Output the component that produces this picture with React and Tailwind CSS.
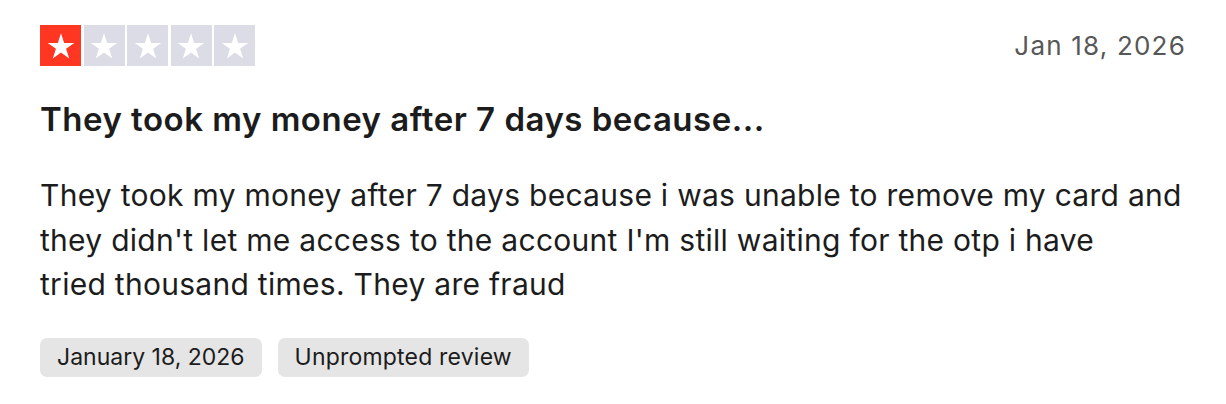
import React from "react";

function Star({ filled }) {
  return (
    <div className={`flex h-[41px] w-[41px] items-center justify-center ${filled ? "bg-[#ff3722]" : "bg-[#dcdce6]"}`}>
      <svg viewBox="0 0 24 24" className="h-[32px] w-[32px]">
        <path
          d="M12 2.5l2.35 7.2h7.6l-6.15 4.45 2.35 7.25L12 16.9l-6.15 4.5 2.35-7.25L2.050 9.7h7.6z"
          fill="#fff"
        />
      </svg>
    </div>
  );
}

export default function App() {
  return (
    <div className="min-h-[404px] w-[1226px] bg-white px-[40px] pt-[25px]" style={{ fontFamily: "Inter, 'Noto Sans', sans-serif" }}>
      <div className="flex items-center justify-between">
        <div className="flex gap-[2.5px]">
          <Star filled />
          <Star />
          <Star />
          <Star />
          <Star />
        </div>
        <div className="text-[26px] leading-[36px] tracking-[1.2px] text-[#575757]">Jan 18, 2026</div>
      </div>
      <h2 className="mt-[33px] text-[33px] font-semibold leading-[40px] tracking-[0.5px] text-[#1c1c1c]">They took my money after 7 days because...</h2>
      <p className="mt-[34px] text-[30px] leading-[44.5px] tracking-[0.28px] text-[#1c1c1c]">
        They took my money after 7 days because i was unable to remove my card and they didn't let me access to the account I'm still waiting for the otp i have
        <br />
        tried thousand times. They are fraud
      </p>
      <div className="mt-[31px] flex gap-[16px]">
        <span className="h-[39px] rounded-[7px] bg-[#e5e5e5] px-[17px] text-[23px] leading-[39px] text-[#1c1c1c]">January 18, 2026</span>
        <span className="h-[39px] rounded-[7px] bg-[#e5e5e5] px-[17px] text-[23px] leading-[39px] tracking-[0.2px] text-[#1c1c1c]">Unprompted review</span>
      </div>
    </div>
  );
}
